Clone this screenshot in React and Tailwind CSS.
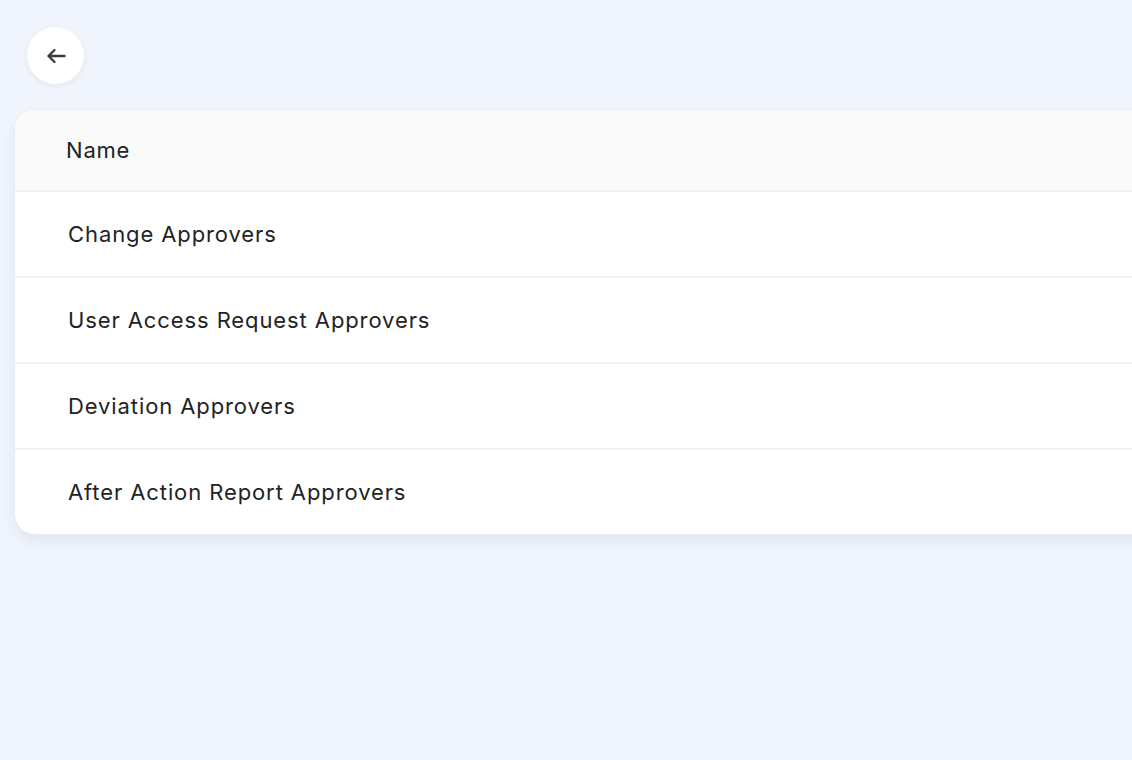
import React from "react";

const rows = [
  "Change Approvers",
  "User Access Request Approvers",
  "Deviation Approvers",
  "After Action Report Approvers",
];

function BackArrow() {
  return (
    <svg width="20" height="16" viewBox="0 0 20 16" fill="none" className="text-[#3d3d3d]">
      <path
        d="M18.5 8H2.5M8.5 2L2.5 8l6 6"
        stroke="currentColor"
        strokeWidth="2.4"
        strokeLinecap="round"
        strokeLinejoin="round"
      />
    </svg>
  );
}

export default function App() {
  return (
    <div
      className="h-[760px] w-[1132px] overflow-hidden bg-[#f0f4fc] px-[15px] pt-[27px] text-[#232323]"
      style={{ fontFamily: "Inter, 'Noto Sans', sans-serif" }}
    >
      <button
        type="button"
        className="ml-3 mb-[26px] flex h-[57px] w-[57px] items-center justify-center rounded-full bg-white shadow-[0_2px_6px_rgba(0,0,0,0.06)]"
      >
        <BackArrow />
      </button>

      <div className="w-[1160px] overflow-hidden rounded-[20px] bg-white shadow-[0_6px_14px_rgba(30,40,80,0.08)]">
        <div className="flex h-[82px] items-center border-b-2 border-[#eef2f9] bg-[#fafafa] pl-[51px] text-[22px] tracking-[0.8px]">
          Name
        </div>
        {rows.map((name, i) => (
          <div
            key={name}
            className={`flex items-center pl-[53px] text-[22px] tracking-[0.9px] ${
              i < rows.length - 1 ? "h-[86px] border-b-2 border-[#eef2f9]" : "h-[84px]"
            }`}
          >
            {name}
          </div>
        ))}
      </div>
    </div>
  );
}
